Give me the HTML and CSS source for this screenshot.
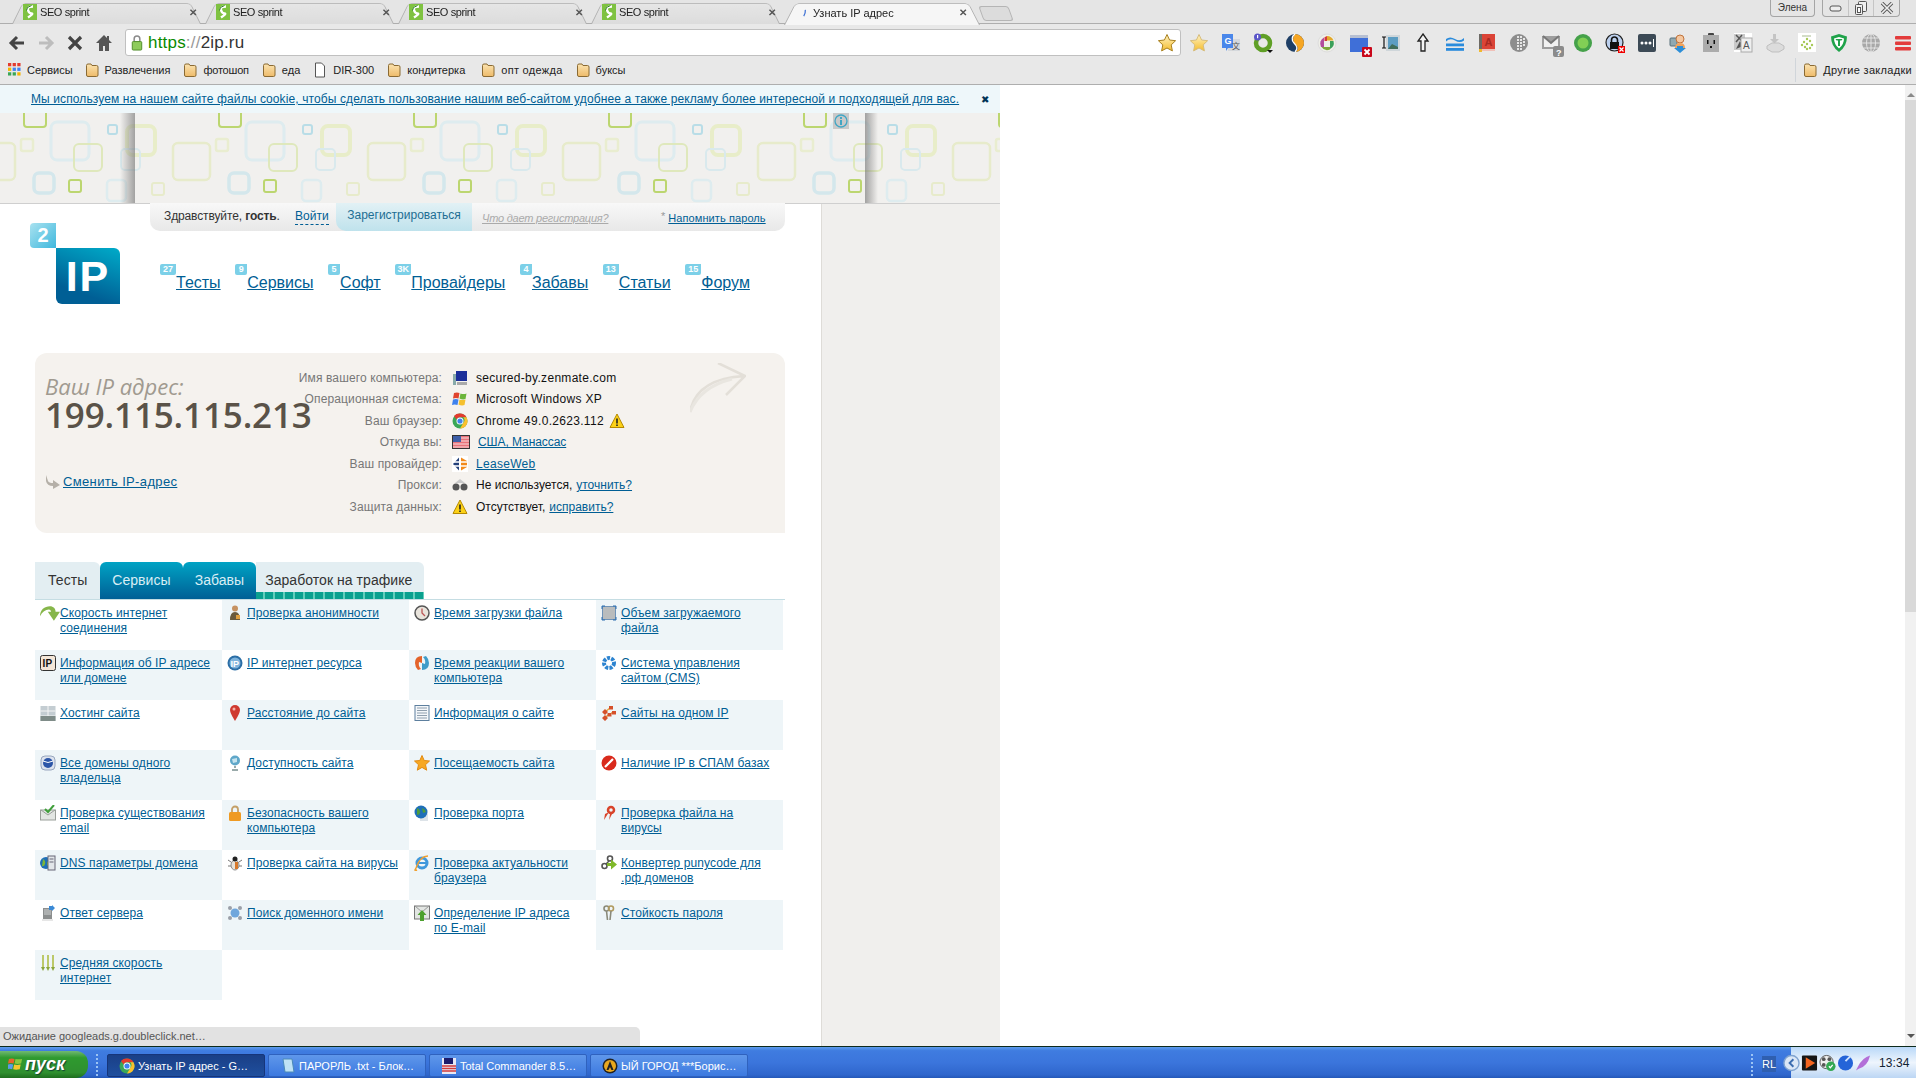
FILE: index.html
```html
<!DOCTYPE html>
<html lang="ru">
<head>
<meta charset="utf-8">
<title>Узнать IP адрес</title>
<link rel="stylesheet" href="styles.css">
</head>
<body>
<svg class="sprite" aria-hidden="true">
  <defs>
    <linearGradient id="gStar" x1="0" y1="0" x2="0" y2="1"><stop offset="0" stop-color="#fff3c4"/><stop offset="1" stop-color="#f5bd2e"/></linearGradient>
    <linearGradient id="gFold" x1="0" y1="0" x2="0" y2="1"><stop offset="0" stop-color="#fbe3b0"/><stop offset="1" stop-color="#eebb6a"/></linearGradient>
    <linearGradient id="gPanelL" x1="0" x2="1" y1="0" y2="0"><stop offset="0" stop-color="#777" stop-opacity="0"/><stop offset="1" stop-color="#777" stop-opacity=".65"/></linearGradient>
    <linearGradient id="gPanelR" x1="0" x2="1" y1="0" y2="0"><stop offset="0" stop-color="#777" stop-opacity=".65"/><stop offset="1" stop-color="#777" stop-opacity="0"/></linearGradient>
    <symbol id="folder" viewBox="0 0 14 16"><path d="M1.500 3.500q0-1.500 1.500-1.500h3l1 1.500h4.500q1.500 0 1.500 1.500v8q0 1.500-1.500 1.500h-8.500q-1.500 0-1.500-1.500z" fill="url(#gFold)" stroke="#8a6a33"/></symbol>
    <symbol id="seo" viewBox="0 0 16 16"><rect x="1" y="0" width="14" height="16" fill="#7fc241"/><path d="M11 2.500Q5 2.500 6 6t3.500 3.500T6 13.500" fill="none" stroke="#fff" stroke-width="2.400"/><path d="M9.500 1.500Q4 3 4.500 6.500" fill="none" stroke="#2f7d2a" stroke-width="1"/></symbol>
    <symbol id="warn" viewBox="0 0 16 16"><path d="M8 1l7 13.500H1z" fill="#fcd116" stroke="#b58900" stroke-linejoin="round"/><path d="M8 5.500v5M8 11.500v1.500" stroke="#222" stroke-width="1.600"/></symbol>
    <symbol id="chrome" viewBox="0 0 16 16"><circle cx="8" cy="8" r="7.500" fill="#3aa757"/><path d="M8 .5a7.500 7.500 0 0 1 6.500 3.750H8a3.750 3.750 0 0 0-3.400 2.200L2 2.900A7.500 7.500 0 0 1 8 .5z" fill="#e33b2e"/><path d="M14.500 4.250A7.500 7.500 0 0 1 8 15.500l3.200-5.500a3.750 3.750 0 0 0 0-5.750z" fill="#fbc02d"/><circle cx="8" cy="8" r="3.500" fill="#fff"/><circle cx="8" cy="8" r="2.600" fill="#3f82ee"/></symbol>
    <symbol id="pat" viewBox="0 0 195 90">
      <rect x="51" y="-4" width="22" height="18" rx="3" fill="none" stroke="#bcd66f" stroke-width="2"/>
      <rect x="78" y="9" width="38" height="38" rx="6" fill="none" stroke="#deecef" stroke-width="3"/>
      <rect x="135" y="12" width="9" height="9" rx="2" fill="none" stroke="#b9dde7" stroke-width="2"/>
      <rect x="154" y="13" width="28" height="29" rx="6" fill="none" stroke="#e8edc9" stroke-width="4"/>
      <rect x="5" y="30" width="37" height="37" rx="5" fill="none" stroke="#e7ebcb" stroke-width="2.500"/>
      <rect x="48" y="26" width="12" height="12" rx="2" fill="none" stroke="#e9edd0" stroke-width="2.500"/>
      <rect x="101" y="31" width="28" height="27" rx="5" fill="none" stroke="#dfe8bc" stroke-width="2"/>
      <rect x="148" y="36" width="19" height="21" rx="4" fill="none" stroke="#d9e9ed" stroke-width="2"/>
      <rect x="61" y="60" width="20" height="20" rx="5" fill="none" stroke="#d4e7ec" stroke-width="3.500"/>
      <rect x="96" y="67" width="12" height="12" rx="2" fill="none" stroke="#bcd66f" stroke-width="2"/>
      <rect x="179" y="70" width="12" height="12" rx="2" fill="none" stroke="#e7ebcb" stroke-width="2"/>
      <rect x="134" y="67" width="19" height="21" rx="4" fill="none" stroke="#deecef" stroke-width="2.500"/>
    </symbol>
  </defs>
</svg>

<header class="chrome">
  <div class="tabstrip">
    <div class="tab"><svg class="fav"><use href="#seo"/></svg><span class="tab-title">SEO sprint</span><span class="tab-x">✕</span></div>
    <div class="tab"><svg class="fav"><use href="#seo"/></svg><span class="tab-title">SEO sprint</span><span class="tab-x">✕</span></div>
    <div class="tab"><svg class="fav"><use href="#seo"/></svg><span class="tab-title">SEO sprint</span><span class="tab-x">✕</span></div>
    <div class="tab"><svg class="fav"><use href="#seo"/></svg><span class="tab-title">SEO sprint</span><span class="tab-x">✕</span></div>
    <div class="tab tab-active"><svg class="spin" viewBox="0 0 16 16"><path d="M6 13Q9 9 8.500 3" fill="none" stroke="#3b6fd4" stroke-width="2"/></svg><span class="tab-title">Узнать IP адрес</span><span class="tab-x">✕</span></div>
    <div class="tab-new"></div>
    <div class="win">
      <span class="win-user">Элена</span>
      <div class="win-btns">
        <span class="win-btn"><svg width="14" height="10" viewBox="0 0 14 10"><rect x="1" y="3" width="11" height="5" rx="2" fill="#eee" stroke="#555"/></svg></span>
        <span class="win-btn"><svg width="14" height="14" viewBox="0 0 14 14"><rect x="4.500" y=".5" width="8" height="10" rx="1" fill="#eee" stroke="#555"/><rect x="1.500" y="3.500" width="7" height="10" rx="1" fill="#eee" stroke="#555"/><rect x="3.500" y="6.500" width="3" height="5" fill="#fff" stroke="#555"/></svg></span>
        <span class="win-btn win-close"><svg width="14" height="12" viewBox="0 0 14 12"><path d="M2 1l10 10M12 1L2 11" stroke="#555" stroke-width="3.400"/><path d="M2 1l10 10M12 1L2 11" stroke="#eee" stroke-width="1.600"/></svg></span>
      </div>
    </div>
  </div>

  <div class="toolbar">
    <div class="navbtns">
      <svg class="nb" viewBox="0 0 20 20"><path d="M17 10H5M10 4l-6 6 6 6" fill="none" stroke="#444" stroke-width="3"/></svg>
      <svg class="nb" viewBox="0 0 20 20"><path d="M3 10h12M10 4l6 6-6 6" fill="none" stroke="#bdbdbd" stroke-width="3"/></svg>
      <svg class="nb" viewBox="0 0 20 20"><path d="M4 4l12 12M16 4L4 16" stroke="#444" stroke-width="3.200"/></svg>
      <svg class="nb" viewBox="0 0 20 20"><path d="M10 2L2 10h3v8h4v-5h2v5h4v-8h3l-3-3V3h-2v2z" fill="#555"/></svg>
    </div>
    <div class="omni">
      <svg class="lock" viewBox="0 0 12 18"><path d="M3 8V5a3 3 0 0 1 6 0v3" fill="none" stroke="#8a8a8a" stroke-width="1.600"/><rect x="1" y="8" width="10" height="9" rx="1" fill="#8ecb5b" stroke="#4d8a26"/></svg>
      <span class="url"><span class="url-s">https</span><span class="url-sep">://</span>2ip.ru</span>
      <svg class="omni-star" viewBox="0 0 20 20"><polygon points="10,1.500 12.600,7 18.600,7.700 14.200,11.900 15.400,17.900 10,15 4.600,17.900 5.800,11.900 1.400,7.700 7.400,7" fill="url(#gStar)" stroke="#a8801f"/></svg>
    </div>
    <div class="exts">
      <svg class="ext" viewBox="0 0 20 20"><polygon points="10,1.500 12.600,7 18.600,7.700 14.200,11.900 15.400,17.900 10,15 4.600,17.900 5.800,11.900 1.400,7.700 7.400,7" fill="url(#gStar)" stroke="#d6bc7c"/></svg>
      <svg class="ext" viewBox="0 0 20 20"><rect x="7" y="6" width="12" height="12" fill="#d5d8dc"/><path d="M1 1h11v14H7l-2 3v-3H1z" fill="#4a87ea"/><text x="3.500" y="11" class="svgt tw">G</text><text x="11" y="16" class="svgt td">文</text></svg>
      <svg class="ext" viewBox="0 0 20 20"><circle cx="10" cy="10" r="7" fill="none" stroke="#5f9f26" stroke-width="4.500"/><circle cx="4.500" cy="4" r="3.500" fill="#5a55c8"/><rect x="4" y="2" width="1.200" height="3.200" fill="#fff"/><path d="M14 17h6l-3 3z" fill="#111"/></svg>
      <svg class="ext" viewBox="0 0 20 20"><circle cx="10" cy="10" r="9" fill="#1f3f66"/><path d="M10 1a9 9 0 0 1 0 18c5-3 2-6 0-8-3-3-2-8 0-10z" fill="#f6a623"/><path d="M10 1c-3 2-4 6-1 9 2 2 5 5 1 9" fill="none" stroke="#fff" stroke-width="1.300"/></svg>
      <svg class="ext" viewBox="0 0 20 20"><circle cx="10" cy="10" r="9" fill="#efefe8" stroke="#ddd"/><path d="M10 3a7 7 0 0 1 6.500 4.500H10z" fill="#e3a92b"/><path d="M16.500 8A7 7 0 0 1 13 16V8z" fill="#3ba05a"/><path d="M13 16.500A7 7 0 0 1 4.500 14h8.500z" fill="#7ca83a"/><path d="M4 14a7 7 0 0 1 3-9.500V14z" fill="#b24c9e"/><path d="M7.500 4.200L10 3v5H7.500z" fill="#d33a3a"/></svg>
      <svg class="ext ext-big" viewBox="0 0 24 24"><rect x="1" y="2" width="18" height="3" fill="#b6bfd2"/><rect x="1" y="5" width="18" height="14" fill="#3f6fd8"/><rect x="13" y="14" width="10" height="10" rx="1" fill="#c9071a"/><path d="M15.500 16.500l5 5M20.500 16.500l-5 5" stroke="#fff" stroke-width="1.800"/></svg>
      <svg class="ext" viewBox="0 0 20 20"><rect x="5" y="2" width="14" height="16" fill="#cfd6da"/><rect x="7" y="4" width="10" height="12" fill="#5d9dc2"/><path d="M7 16l4-5 6 3v2z" fill="#416e5a"/><path d="M1 4h4M1 15h4M3 4v11" stroke="#111" stroke-width="1.200"/></svg>
      <svg class="ext" viewBox="0 0 20 20"><path d="M10 1l5 7h-3v10H8V8H5z" fill="#f4f4f4" stroke="#222" stroke-width="1.300"/></svg>
      <svg class="ext" viewBox="0 0 20 20"><path d="M1 6q4-3 9 0t9-1v2.500q-4 3-9 0T1 8.500z" fill="#2a8bdc"/><rect x="1" y="10.500" width="18" height="2.800" fill="#2a8bdc"/><rect x="1" y="15" width="18" height="2.800" fill="#2a8bdc"/></svg>
      <svg class="ext" viewBox="0 0 20 20"><rect x="2" y="1" width="16" height="17" fill="#db4437"/><rect x="2" y="1" width="3" height="17" fill="#6d6a65"/><rect x="2" y="16" width="16" height="2" fill="#f0c0b8"/><rect x="2" y="16" width="3" height="3" fill="#f0b92e"/><text x="7.500" y="13" class="svgt ta">A</text></svg>
      <svg class="ext" viewBox="0 0 20 20"><circle cx="10" cy="10" r="9" fill="#8d8d8d"/><path d="M8 3h2v2H8zm3 0h2v2h-2zm3 2h2v2h-2zM8 6h2v2H8zm3 0h2v2h-2zm3 2h2v2h-2zM8 9h2v2H8zm3 0h2v2h-2zm3 2h2v2h-2zm-6 1h2v2H8zm3 0h2v2h-2zm-3 3h2v2H8zm3 0h2v2h-2z" fill="#e6e6e6"/></svg>
      <svg class="ext ext-big" viewBox="0 0 24 24"><path d="M1 3h18v13H1z" fill="#9d9d9d"/><path d="M3 4l7 6 7-6v10H3z" fill="#f1f1f1"/><path d="M2 3l8 7 8-7" fill="none" stroke="#777" stroke-width="2"/><rect x="12" y="13" width="11" height="11" rx="2" fill="#8b8b8b"/><text x="15" y="22.500" class="svgt tq">?</text></svg>
      <svg class="ext" viewBox="0 0 20 20"><circle cx="10" cy="10" r="9" fill="#45a14a"/><circle cx="10" cy="10" r="5.500" fill="#82cf55"/></svg>
      <svg class="ext" viewBox="0 0 20 20"><circle cx="9.500" cy="9.500" r="8.500" fill="#bcd0ee" stroke="#222" stroke-width="1.200"/><path d="M6.500 9V7a3 3 0 0 1 6 0v2" fill="none" stroke="#111" stroke-width="1.600"/><rect x="5" y="9" width="9" height="7" fill="#111"/><rect x="13" y="13" width="7" height="7" fill="#e00"/><path d="M14.500 14.500l4 4M18.500 14.500l-4 4" stroke="#fff" stroke-width="1.200"/></svg>
      <svg class="ext" viewBox="0 0 20 20"><rect x="1" y="1" width="18" height="18" rx="2" fill="#3c4a56"/><circle cx="5" cy="10" r="1.500" fill="#fff"/><circle cx="9" cy="10" r="1.500" fill="#fff"/><circle cx="13" cy="10" r="1.500" fill="#fff"/><rect x="16" y="6" width="1" height="8" fill="#fff"/></svg>
      <svg class="ext" viewBox="0 0 20 20"><rect x="1" y="5" width="7" height="8" rx="1" fill="#8fa9b2" stroke="#58707a"/><circle cx="11" cy="6" r="4" fill="#f4c7a0" stroke="#c0733c"/><path d="M6 15q0-5 5-5t5 5z" fill="#f1a35d"/><path d="M8 13h6v2h3l-6 5-6-5h3z" fill="#2d8fd8"/></svg>
      <svg class="ext" viewBox="0 0 20 20"><rect x="7" y="0" width="6" height="3" rx="1" fill="#444"/><rect x="2" y="2" width="16" height="17" fill="#acacac"/><rect x="6" y="7" width="1.500" height="4" fill="#111"/><rect x="12.500" y="7" width="1.500" height="4" fill="#111"/><rect x="9" y="13" width="2" height="2" fill="#111"/></svg>
      <svg class="ext" viewBox="0 0 20 20"><rect x="1" y="0" width="18" height="19" fill="#fff"/><rect x="1" y="1" width="11" height="16" fill="#c9c9c9"/><path d="M3 2l7 7M9 2L3 9" stroke="#555" stroke-width="1.500"/><path d="M3 16l4-8 3 5z" fill="#555"/><rect x="8" y="5" width="11" height="14" fill="#efefef" stroke="#aaa"/><text x="10" y="16" class="svgt tl">A</text></svg>
      <svg class="ext" viewBox="0 0 20 20"><path d="M8 1h3v5h3l-4.500 4.500L5 6h3z" fill="#c4c4c4"/><path d="M2 13l5-3h7l5 3v3l-5 3H7l-5-3z" fill="#dcdcdc" stroke="#bfbfbf"/></svg>
      <svg class="ext" viewBox="0 0 20 20"><rect x="1" y="0" width="18" height="19" fill="#fff"/><path d="M5 3h9" stroke="#a8bb90" stroke-width="1"/><g fill="#a7c957"><circle cx="10" cy="6" r="1.200"/><circle cx="7" cy="9" r="1.200"/><circle cx="13" cy="8" r="1.200"/><circle cx="5" cy="12" r="1.200"/><circle cx="10" cy="11" r="1.200"/><circle cx="15" cy="12" r="1.200"/><circle cx="8" cy="14" r="1.200"/><circle cx="13" cy="15" r="1.200"/><circle cx="10" cy="16" r="1.200"/></g></svg>
      <svg class="ext" viewBox="0 0 20 20"><path d="M10 1l8 2.500q0 10-8 15.500Q2 13.500 2 3.500z" fill="#1fa34a"/><path d="M10 4l5 1.500q0 6-5 10-5-4-5-10z" fill="#fff"/><path d="M6.500 6h7l-1 1.500H11V13H9V7.500H7.500z" fill="#1fa34a"/></svg>
      <svg class="ext" viewBox="0 0 20 20"><circle cx="10" cy="10" r="9" fill="#a8a8a8"/><path d="M1 10h18M10 1v18M3 5h14M3 15h14" stroke="#e4e4e4"/><ellipse cx="10" cy="10" rx="4.500" ry="9" fill="none" stroke="#e4e4e4"/></svg>
      <svg class="ext" viewBox="0 0 20 20"><rect x="2" y="3" width="16" height="3.500" rx="1" fill="#e33b3b"/><rect x="2" y="8.500" width="16" height="3.500" rx="1" fill="#e33b3b"/><rect x="2" y="14" width="16" height="3.500" rx="1" fill="#e33b3b"/></svg>
    </div>
  </div>

  <nav class="bookmarks">
    <span class="bm"><svg class="apps" viewBox="0 0 14 14"><g><rect x="0" y="0" width="3.500" height="3.500" fill="#e33b2e"/><rect x="5" y="0" width="3.500" height="3.500" fill="#e33b2e"/><rect x="10" y="0" width="3.500" height="3.500" fill="#e33b2e"/><rect x="0" y="5" width="3.500" height="3.500" fill="#f4b400"/><rect x="5" y="5" width="3.500" height="3.500" fill="#3f82ee"/><rect x="10" y="5" width="3.500" height="3.500" fill="#3f82ee"/><rect x="0" y="10" width="3.500" height="3.500" fill="#3aa757"/><rect x="5" y="10" width="3.500" height="3.500" fill="#3aa757"/><rect x="10" y="10" width="3.500" height="3.500" fill="#f4b400"/></g></svg>Сервисы</span>
    <span class="bm"><svg class="bmi"><use href="#folder"/></svg>Развлечения</span>
    <span class="bm bm-tight"><svg class="bmi"><use href="#folder"/></svg>фотошоп</span>
    <span class="bm"><svg class="bmi"><use href="#folder"/></svg>еда</span>
    <span class="bm"><svg class="bmi" viewBox="0 0 14 16"><path d="M2.500 1h6l3 3v11h-9z" fill="#fff" stroke="#555"/></svg>DIR-300</span>
    <span class="bm bm-gap"><svg class="bmi"><use href="#folder"/></svg>кондитерка</span>
    <span class="bm bm-wide"><svg class="bmi"><use href="#folder"/></svg>опт одежда</span>
    <span class="bm"><svg class="bmi"><use href="#folder"/></svg>буксы</span>
    <span class="bm bm-other"><svg class="bmi"><use href="#folder"/></svg>Другие закладки</span>
  </nav>
</header>

<div class="viewport">
  <div class="page">
    <div class="cookie"><a href="#">Мы используем на нашем сайте файлы cookie, чтобы сделать пользование нашим веб-сайтом удобнее а также рекламу более интересной и подходящей для вас.</a><span class="cookie-x">✖</span></div>

    <div class="banner">
      <svg class="banner-art" width="1000" height="90" viewBox="0 0 1000 90">
        <defs>
          <pattern id="tile" patternUnits="userSpaceOnUse" x="168" y="0" width="195" height="90"><use href="#pat" width="195" height="90"/></pattern>
          <filter id="soft"><feGaussianBlur stdDeviation=".7"/></filter>
        </defs>
        <rect width="1000" height="90" fill="#f1f0ee"/>
        <rect width="1000" height="90" fill="url(#tile)" filter="url(#soft)"/>
        <rect x="120" width="15" height="90" fill="url(#gPanelL)"/>
        <rect x="865" width="13" height="90" fill="url(#gPanelR)"/>
        <rect x="833" width="16" height="16" fill="#c9c9c9"/>
        <circle cx="841" cy="8" r="6" fill="none" stroke="#41a6c4" stroke-width="1.300"/>
        <rect x="840" y="4" width="2" height="2" fill="#41a6c4"/><rect x="840" y="7" width="2" height="5" fill="#41a6c4"/>
      </svg>
    </div>

    <div class="page-row">
      <main class="main">
        <div class="userbar">
          <span class="hello">Здравствуйте, <b>гость</b>.</span>
          <a class="login" href="#">Войти</a>
          <span class="register">Зарегистрироваться</span>
          <a class="why" href="#">Что дает регистрация?</a>
          <span class="ast">*</span>
          <a class="remind" href="#">Напомнить пароль</a>
        </div>

        <div class="head">
          <div class="logo">
            <span class="logo-two">2</span>
            <span class="logo-ip">IP</span>
          </div>
          <nav class="topnav">
            <div class="tn"><span class="badge badge-w">27</span><a href="#">Тесты</a></div>
            <div class="tn"><span class="badge">9</span><a href="#">Сервисы</a></div>
            <div class="tn"><span class="badge">5</span><a href="#">Софт</a></div>
            <div class="tn"><span class="badge badge-w">3K</span><a href="#">Провайдеры</a></div>
            <div class="tn"><span class="badge">4</span><a href="#">Забавы</a></div>
            <div class="tn"><span class="badge badge-w">13</span><a href="#">Статьи</a></div>
            <div class="tn"><span class="badge badge-w">15</span><a href="#">Форум</a></div>
          </nav>
        </div>

        <section class="ipbox">
          <div class="ipleft">
            <div class="ipcap">Ваш IP адрес:</div>
            <div class="ipnum">199.115.115.213</div>
            <div class="ipchange"><svg class="ipch-i" viewBox="0 0 16 16"><path d="M1 2l2 6q1 2 5 2V7l7 5-7 4v-3q-6 0-7-5z" fill="#b5b0a8"/></svg><a href="#">Сменить IP-адрес</a></div>
          </div>
          <div class="ipinfo">
            <span class="lbl">Имя вашего компьютера:</span><svg class="ii" viewBox="0 0 16 16"><rect x="4" y="1" width="11" height="10" fill="#1c2f9a"/><rect x="1" y="4" width="3" height="11" fill="#8aa"/><rect x="5" y="12" width="10" height="3" fill="#aaa"/></svg><span class="val">secured-by.zenmate.com</span>
            <span class="lbl">Операционная система:</span><svg class="ii" viewBox="0 0 16 16"><path d="M2 2q3-1 5.500 0l-1 5.500Q4 6.500 1 7.500z" fill="#e0442e"/><path d="M8.500 2.500q3 1 6 0L13.500 8q-3 1-6-.5z" fill="#6bb53a"/><path d="M1 8.500q3-1 5.500 0L5.500 14q-3-1-5.500 0z" fill="#3f82ee"/><path d="M7.500 8.500q3 1 6 0l-1 5.500q-3 1-6-.5z" fill="#f5c02e"/></svg><span class="val">Microsoft Windows XP</span>
            <span class="lbl">Ваш браузер:</span><svg class="ii"><use href="#chrome"/></svg><span class="val">Chrome 49.0.2623.112 <svg class="ii-w"><use href="#warn"/></svg></span>
            <span class="lbl">Откуда вы:</span><svg class="ii ii-flag" viewBox="0 0 18 14"><rect width="18" height="14" fill="#333"/><rect x="1" y="1" width="16" height="12" fill="#e8727a"/><path d="M1 3h16M1 6h16M1 9h16M1 12h16" stroke="#f6dede"/><rect x="1" y="1" width="8" height="6" fill="#3e5fa8"/></svg><a class="val-a val-us" href="#">США, Манассас</a>
            <span class="lbl">Ваш провайдер:</span><svg class="ii" viewBox="0 0 16 16"><rect width="16" height="16" fill="#fff"/><path d="M7 1.500v13L1 8z" fill="#24417a"/><path d="M9 1.500L15 5v6l-6 3.500z" fill="#f28a1a"/><path d="M1 6h14M1 10h14" stroke="#fff" stroke-width="1.300"/></svg><a class="val-a" href="#">LeaseWeb</a>
            <span class="lbl">Прокси:</span><svg class="ii" viewBox="0 0 16 16"><circle cx="4" cy="10" r="3.500" fill="#555"/><circle cx="12" cy="10" r="3.500" fill="#555"/><path d="M3 6l5-4 5 4" fill="#c9c9c9"/></svg><span class="val val-ru">Не используется, <a href="#">уточнить?</a></span>
            <span class="lbl">Защита данных:</span><svg class="ii"><use href="#warn"/></svg><span class="val val-ru">Отсутствует, <a href="#">исправить?</a></span>
          </div>
          <svg class="iparrow" viewBox="0 0 56 50"><path d="M0 49Q6 16 54 13M28 0L55 13 36 32" fill="none" stroke="#e3dfd8" stroke-width="2.500"/><path d="M0 49Q10 24 42 16" fill="none" stroke="#e9e6e0" stroke-width="3"/></svg>
        </section>

        <div class="tabs">
          <span class="ptab ptab-l ptab-first">Тесты</span>
          <span class="ptab ptab-d">Сервисы</span>
          <span class="ptab ptab-d">Забавы</span>
          <span class="ptab ptab-l ptab-g">Заработок на трафике</span>
        </div>

        <div class="links">
          <div class="cell"><svg class="ci ci-w" viewBox="0 0 18 16"><path d="M0 10C0 4 4 1 9 1c3 0 5 2 5 5h4l-5.500 8L7 6h3c0-1-1-2-2-2C5 4 2 6 0 10z" fill="#86b64a"/></svg><a href="#">Скорость интернет<br>соединения</a></div>
          <div class="cell"><svg class="ci" viewBox="0 0 16 16"><circle cx="8" cy="3.500" r="3" fill="#c69262"/><path d="M3 15q0-8 5-8t5 8z" fill="#6a5a3c"/><rect x="9" y="10" width="4" height="4" fill="#e0a040"/></svg><a href="#">Проверка анонимности</a></div>
          <div class="cell"><svg class="ci" viewBox="0 0 16 16"><circle cx="8" cy="8" r="7" fill="#e9e4dc" stroke="#555" stroke-width="1.500"/><path d="M8 3.500V8l3 3" fill="none" stroke="#b55" stroke-width="1.300"/></svg><a href="#">Время загрузки файла</a></div>
          <div class="cell"><svg class="ci" viewBox="0 0 16 16"><rect x="1.500" y="1.500" width="13" height="13" fill="#b9bcbd" stroke="#6f93b8"/><path d="M1 4V1h3M12 1h3v3M1 12v3h3M12 15h3v-3" fill="none" stroke="#2d6fb0"/></svg><a href="#">Объем загружаемого<br>файла</a></div>

          <div class="cell"><svg class="ci" viewBox="0 0 16 16"><rect x=".5" y=".5" width="15" height="15" rx="2" fill="#f3e6d8" stroke="#333"/><text x="2.500" y="12" class="svgt tip">IP</text></svg><a href="#">Информация об IP адресе<br>или домене</a></div>
          <div class="cell"><svg class="ci" viewBox="0 0 16 16"><circle cx="8" cy="8" r="7.500" fill="#2b6ea6"/><circle cx="8" cy="8" r="5.500" fill="#7eb3dc"/><text x="3.500" y="12" class="svgt tipw">IP</text></svg><a href="#">IP интернет ресурса</a></div>
          <div class="cell"><svg class="ci" viewBox="0 0 16 16"><path d="M8 1Q1 1 1 8q0 4 3 7l3-1Q4 11 5 7l3 1z" fill="#e4632a"/><path d="M8 15q7 0 7-7 0-4-3-7L9 2q3 3 2 7L8 8z" fill="#3f9cc9"/></svg><a href="#">Время реакции вашего<br>компьютера</a></div>
          <div class="cell"><svg class="ci" viewBox="0 0 16 16"><circle cx="8" cy="8" r="5" fill="none" stroke="#2d84d0" stroke-width="4" stroke-dasharray="3 1.200"/><circle cx="8" cy="8" r="2" fill="#fff"/></svg><a href="#">Система управления<br>сайтом (CMS)</a></div>

          <div class="cell"><svg class="ci" viewBox="0 0 16 16"><rect x=".5" y="1" width="15" height="15" fill="#c4cdd2"/><path d="M.5 6h15M.5 11h15M8 1v15" stroke="#f5f5f5"/><rect x=".5" y="11" width="15" height="5" fill="#7f8c88"/></svg><a href="#">Хостинг сайта</a></div>
          <div class="cell"><svg class="ci" viewBox="0 0 16 16"><path d="M8 16Q3 8 3 5a5 5 0 0 1 10 0q0 3-5 11z" fill="#cf3a30"/><circle cx="7" cy="4" r="1.500" fill="#f4b0a8"/></svg><a href="#">Расстояние до сайта</a></div>
          <div class="cell"><svg class="ci" viewBox="0 0 16 16"><rect x="1" y=".5" width="14" height="15" fill="#f4f7fa" stroke="#5d7f9e"/><path d="M3 3h10M3 5.500h10M3 8h10M3 10.500h10M3 13h10" stroke="#8f9fae"/></svg><a href="#">Информация о сайте</a></div>
          <div class="cell"><svg class="ci" viewBox="0 0 16 16"><path d="M4 7l5-4M4 13l3-3M10 8h2" stroke="#e8a33a" stroke-width="1.500"/><path d="M1 7l3-3 3 3-3 3zM8 1h4v3.500H8zM11 6h4v3.500h-4zM1 13l3-3 3 3-3 3zM6.500 8h4v3.500h-4z" fill="#d5502a"/></svg><a href="#">Сайты на одном IP</a></div>

          <div class="cell"><svg class="ci" viewBox="0 0 16 16"><rect x="1" y="1" width="14" height="14" rx="4" fill="#dde3ee" stroke="#97a6be"/><circle cx="8" cy="8" r="5" fill="#2c56a8"/><path d="M3 6q5 3 10 0" stroke="#fff" fill="none"/></svg><a href="#">Все домены одного<br>владельца</a></div>
          <div class="cell"><svg class="ci" viewBox="0 0 16 16"><circle cx="8" cy="5.500" r="5" fill="#5fa7c9"/><path d="M5 4l5-1v4l-4 1z" fill="#c5e3ee"/><path d="M8 11v2M5 15h6" stroke="#9aa" stroke-width="2"/></svg><a href="#">Доступность сайта</a></div>
          <div class="cell"><svg class="ci" viewBox="0 0 16 16"><polygon points="8,.5 10.200,5.500 15.500,6 11.500,9.700 12.700,15.200 8,12.400 3.300,15.200 4.500,9.700 .5,6 5.800,5.500" fill="#f7a823" stroke="#e28b12"/></svg><a href="#">Посещаемость сайта</a></div>
          <div class="cell"><svg class="ci" viewBox="0 0 16 16"><circle cx="8" cy="8" r="7.500" fill="#d92a1c"/><path d="M4 12l8-8" stroke="#fff" stroke-width="2.200"/></svg><a href="#">Наличие IP в СПАМ базах</a></div>

          <div class="cell"><svg class="ci" viewBox="0 0 16 16"><rect x=".5" y="5" width="15" height="10" fill="#e3e6e3" stroke="#9a9f9a"/><path d="M1 5l7 5 7-5" fill="none" stroke="#9a9f9a"/><path d="M5 4l3 3 6-7" fill="none" stroke="#3f9f3a" stroke-width="2"/></svg><a href="#">Проверка существования<br>email</a></div>
          <div class="cell"><svg class="ci" viewBox="0 0 16 16"><path d="M5 8V4.500a3 3 0 0 1 6 0V8" fill="none" stroke="#c4a068" stroke-width="1.800"/><rect x="2" y="7" width="12" height="9" rx="1.500" fill="#ef9a22"/></svg><a href="#">Безопасность вашего<br>компьютера</a></div>
          <div class="cell"><svg class="ci" viewBox="0 0 16 16"><rect x="6" y="9" width="8" height="7" fill="#dde3e8"/><circle cx="7" cy="7" r="6.500" fill="#1f6fb8"/><path d="M3 3q3 1 3 4t-3 3zM8 3q3 1 4 4l-3 1z" fill="#4f9d3a"/></svg><a href="#">Проверка порта</a></div>
          <div class="cell"><svg class="ci" viewBox="0 0 16 16"><circle cx="10" cy="5" r="3" fill="none" stroke="#d8432a" stroke-width="2.500"/><path d="M8 7L3 15l1-6zM12 7l-4 8 1-6z" fill="#d8432a"/></svg><a href="#">Проверка файла на<br>вирусы</a></div>

          <div class="cell"><svg class="ci" viewBox="0 0 16 16"><circle cx="6" cy="8" r="6" fill="#1f6fb8"/><path d="M3 4q3 2 2 5t-3 2zM7 6l2 3-2 2z" fill="#7db63a"/><rect x="8" y="1" width="7" height="14" fill="#e2e6ea" stroke="#667"/><path d="M9.500 4h4M9.500 7h4" stroke="#667"/></svg><a href="#">DNS параметры домена</a></div>
          <div class="cell"><svg class="ci" viewBox="0 0 16 16"><ellipse cx="8" cy="10" rx="4" ry="5" fill="#e7e2d8" stroke="#888"/><circle cx="8" cy="4" r="2.500" fill="#222"/><path d="M4 7L1 5M4 11H1M12 7l3-2M12 11h3" stroke="#777"/><rect x="8" y="7" width="3" height="7" fill="#d8792b"/></svg><a href="#">Проверка сайта на вирусы</a></div>
          <div class="cell"><svg class="ci" viewBox="0 0 16 16"><circle cx="8" cy="8" r="5" fill="none" stroke="#3f98dc" stroke-width="3"/><path d="M3 8h10" stroke="#3f98dc" stroke-width="2"/><path d="M14 1Q6 1 2 13l-1 2q0 1 2 0" fill="none" stroke="#f0a030" stroke-width="1.500"/></svg><a href="#">Проверка актуальности<br>браузера</a></div>
          <div class="cell"><svg class="ci" viewBox="0 0 16 16"><circle cx="3.500" cy="11" r="2.500" fill="none" stroke="#555" stroke-width="1.600"/><circle cx="9" cy="3.500" r="2.500" fill="none" stroke="#555" stroke-width="1.600"/><path d="M5 9l3-3" stroke="#555" stroke-width="1.500"/><path d="M6 8h4V4.500L16 9.500l-6 5V11H6z" fill="#7fb82a"/></svg><a href="#">Конвертер punycode для<br>.рф доменов</a></div>

          <div class="cell"><svg class="ci" viewBox="0 0 16 16"><rect x="3" y="3" width="9" height="11" fill="#8b8e8e"/><path d="M4 5h7M4 7h7M4 9h7" stroke="#cfd2d2"/><rect x="2" y="14" width="11" height="2" fill="#e6e6e6"/><path d="M9 1h3V0l3 3-3 3V5H9z" fill="#3a8ad6"/></svg><a href="#">Ответ сервера</a></div>
          <div class="cell"><svg class="ci" viewBox="0 0 16 16"><circle cx="8" cy="8" r="4.500" fill="#6fa6dc"/><g fill="#9a9fa8"><circle cx="3" cy="3" r="2"/><circle cx="13" cy="3" r="2"/><circle cx="3" cy="13" r="2"/><circle cx="13" cy="13" r="2"/></g></svg><a href="#">Поиск доменного имени</a></div>
          <div class="cell"><svg class="ci" viewBox="0 0 16 16"><rect x=".5" y="1" width="15" height="13" fill="#e3e6e3" stroke="#777"/><path d="M1 1l7 6 7-6" fill="none" stroke="#999"/><path d="M8 5l4.500 5H10v6H6v-6H3.500z" fill="#4da02e"/></svg><a href="#">Определение IP адреса<br>по E-mail</a></div>
          <div class="cell"><svg class="ci" viewBox="0 0 16 16"><circle cx="5.500" cy="3.500" r="2.500" fill="none" stroke="#8a8a7a" stroke-width="1.600"/><circle cx="10" cy="3.500" r="2.500" fill="none" stroke="#b09a60" stroke-width="1.600"/><path d="M5.500 6l1 9M10 6l-1 9" stroke="#8a8a7a" stroke-width="1.600"/></svg><a href="#">Стойкость пароля</a></div>

          <div class="cell"><svg class="ci" viewBox="0 0 16 16"><path d="M3 0v13M8 0v13M13 0v13" stroke="#bcc96a" stroke-width="2"/><path d="M1 12l2 4 2-4zM6 12l2 4 2-4zM11 12l2 4 2-4z" fill="#8aa63a"/></svg><a href="#">Средняя скорость<br>интернет</a></div>
        </div>
      </main>
      <aside class="side"></aside>
    </div>
  </div>
  <div class="scrollbar">
    <span class="sb-up"></span>
    <span class="sb-thumb"></span>
    <span class="sb-down"></span>
  </div>
  <div class="status">Ожидание googleads.g.doubleclick.net…</div>
</div>

<footer class="taskbar">
  <div class="start"><svg class="flag" viewBox="0 0 16 16"><path d="M1 2q3-1 6 0L6 7Q3 6 0 7z" fill="#e9622b"/><path d="M8 2q3 1 7 0l-1 5q-4 1-7 0z" fill="#8cc63f"/><path d="M0 8q3-1 5.500 0l-1 5q-2.500-1-5.500 0z" fill="#5a9bea"/><path d="M6.500 8q3 1 7 0l-1 5q-4 1-7 0z" fill="#f6c62e"/></svg>пуск</div>
  <div class="grip"></div>
  <div class="tasks">
    <div class="task task-on"><svg class="tki"><use href="#chrome"/></svg>Узнать IP адрес - G…</div>
    <div class="task"><svg class="tki" viewBox="0 0 16 16"><path d="M3 1h9l2 13H5z" fill="#bfe2f5" stroke="#4a8ab8"/></svg>ПАРОРЛЬ .txt - Блок…</div>
    <div class="task"><svg class="tki" viewBox="0 0 16 16"><rect x="1" y="0" width="14" height="16" fill="#e8e8f4"/><rect x="3" y="0" width="9" height="6" fill="#1c1c6c"/><path d="M1 8h14M1 10.500h14M1 13h14" stroke="#d23a3a" stroke-width="1.300"/></svg>Total Commander 8.5…</div>
    <div class="task"><svg class="tki" viewBox="0 0 16 16"><circle cx="8" cy="8" r="7.500" fill="#222"/><circle cx="8" cy="8" r="6" fill="#e9a81e"/><path d="M8 3l3.500 9h-2L8 9l-1.500 3h-2z" fill="#222"/></svg>ЫЙ ГОРОД ***Борис…</div>
  </div>
  <div class="rl-grip"></div>
  <span class="rl">RL</span>
  <div class="tray">
    <svg class="tri tri-back" viewBox="0 0 18 18"><circle cx="9" cy="9" r="8" fill="#dbe7f6" stroke="#7fa3d0" stroke-width="1.500"/><path d="M11 5L7 9l4 4" fill="none" stroke="#3b6cb0" stroke-width="2"/></svg>
    <svg class="tri" viewBox="0 0 18 18"><rect x="1" y="1" width="16" height="16" rx="1" fill="#151515"/><path d="M5 3l10 6-10 6z" fill="#f4641e"/></svg>
    <svg class="tri" viewBox="0 0 18 18"><circle cx="8" cy="8" r="7" fill="#eee" stroke="#555"/><circle cx="5" cy="5" r="2" fill="#555"/><circle cx="11" cy="5" r="2" fill="#555"/><circle cx="5" cy="11" r="2" fill="#555"/><circle cx="12.500" cy="12.500" r="5" fill="#34a853"/><path d="M10.500 12.500l1.500 1.500 2.500-3" fill="none" stroke="#fff" stroke-width="1.300"/></svg>
    <svg class="tri" viewBox="0 0 18 18"><circle cx="9" cy="9" r="8" fill="#2564d8"/><path d="M9 7l5-5" stroke="#cfe2ff" stroke-width="2"/></svg>
    <svg class="tri" viewBox="0 0 18 18"><path d="M16 1Q8 3 3 13l-2 4 3-2Q13 13 16 1z" fill="#b36fd8"/></svg>
    <span class="clock">13:34</span>
  </div>
</footer>
</body>
</html>
```

FILE: styles.css
```css
* { box-sizing: border-box; }
html, body { margin: 0; height: 100%; }
body {
  width: 1916px; height: 1078px; overflow: hidden;
  display: flex; flex-direction: column;
  font-family: "Liberation Sans", Arial, sans-serif; font-size: 12px; color: #111; background: #fff;
}
a { color: #005e94; }
.sprite { position: absolute; width: 0; height: 0; }

/* browser chrome */
.chrome { background: #e8e8e8; flex: none; }
.tabstrip { height: 24px; display: flex; padding-left: 10px; border-bottom: 1px solid #aeaeae; background: #e5e5e5; position: relative; }
.tab { position: relative; width: 193px; height: 24px; display: flex; align-items: center; padding: 0 6px 0 12px; font-size: 11px; }
.tab::before { content: ""; position: absolute; inset: 0 2px 0 2px; background: linear-gradient(#e6e6e6, #dcdcdc); border: 1px solid #b0b0b0; border-bottom: 0; border-radius: 5px 5px 0 0; transform: perspective(30px) rotateX(9deg); transform-origin: bottom; }
.tab > * { position: relative; }
.tab-active { width: 200px; padding: 0 15px 0 18px; height: 25px; z-index: 2; }
.tab-active::before { background: #f6f6f6; }
.fav { width: 16px; height: 16px; margin-right: 2px; flex: none; }
.spin { width: 10px; height: 12px; margin-right: 3px; flex: none; }
.tab-title { flex: 1; white-space: nowrap; color: #222; letter-spacing: -.4px; }
.tab-active .tab-title { letter-spacing: 0; }
.tab-x { font-size: 10px; color: #555; font-weight: 700; }
.tab-new { width: 30px; height: 15px; margin: 6px 0 0 -1px; background: #dcdcdc; border: 1px solid #b5b5b5; border-radius: 3px; transform: skewX(20deg); }
.win { margin-left: auto; display: flex; gap: 7px; height: 17px; padding-right: 16px; }
.win-user { width: 45px; height: 17px; border: 1px solid #a5a5a5; border-top: 0; border-radius: 0 0 4px 4px; text-align: center; font-size: 10px; line-height: 15px; color: #333; }
.win-btns { display: flex; border: 1px solid #a5a5a5; border-top: 0; border-radius: 0 0 4px 4px; }
.win-btn { width: 25px; display: flex; align-items: center; justify-content: center; border-left: 1px solid #c5c5c5; }
.win-btn:first-child { border-left: 0; }
.win-close { width: 26px; }

.toolbar { height: 33px; display: flex; align-items: center; padding: 4px 2px 0 0; }
.navbtns { width: 125px; display: flex; gap: 9px; padding-left: 7px; }
.nb { width: 20px; height: 20px; }
.omni { width: 1056px; height: 27px; background: #fff; border: 1px solid #c0c0c0; border-radius: 3px; display: flex; align-items: center; padding-left: 5px; }
.lock { width: 12px; height: 17px; margin-right: 5px; flex: none; }
.url { font-size: 17px; letter-spacing: .2px; color: #333; }
.url-s { color: #0a8a00; }
.url-sep { color: #999; }
.omni-star { width: 20px; height: 20px; margin-left: auto; margin-right: 3px; }
.exts { display: flex; gap: 12px; padding-left: 8px; align-items: center; }
.ext { width: 20px; height: 20px; flex: none; }
.ext-big { width: 24px; height: 24px; margin: 4px -4px 0 0; }
.svgt { font-family: "Liberation Sans", Arial, sans-serif; }
.tw { font-size: 9px; font-weight: 700; fill: #fff; }
.td { font-size: 8px; fill: #555; font-family: "Noto Sans CJK SC", sans-serif; }
.ta { font-size: 11px; font-weight: 700; fill: #a82a22; }
.tq { font-size: 9px; font-weight: 700; fill: #fff; }
.tl { font-size: 10px; fill: #555; }
.tip { font-size: 10px; font-weight: 700; fill: #111; }
.tipw { font-size: 9px; font-weight: 700; fill: #fff; }

.bookmarks { height: 28px; display: flex; align-items: center; padding: 0 0 2px 8px; border-bottom: 1px solid #aeaeae; font-size: 11px; color: #222; }
.bm { display: flex; align-items: center; margin-right: 13px; white-space: nowrap; }
.bm:first-child { margin-right: 12px; }
.bm-tight { letter-spacing: -.2px; }
.bm-gap { margin-right: 16px; }
.bm-wide { letter-spacing: .3px; }
.apps { width: 13px; height: 13px; margin-right: 6px; }
.bmi { width: 14px; height: 16px; margin-right: 6px; flex: none; }
.bm-other { margin: 0 4px 0 auto; padding-left: 7px; border-left: 1px solid #d0d5da; height: 24px; letter-spacing: .3px; }

/* viewport */
.viewport { flex: 1; min-height: 0; display: flex; position: relative; background: #fff; }
.page { width: 1000px; flex: none; display: flex; flex-direction: column; }
.cookie { height: 28px; flex: none; background: #eef7fa; display: flex; align-items: center; padding: 0 11px 0 31px; justify-content: space-between; letter-spacing: .11px; }
.cookie a { white-space: nowrap; }
.cookie-x { font-size: 10px; color: #035; }
.banner { height: 90px; flex: none; }
.banner-art { display: block; }
.page-row { flex: 1; display: flex; min-height: 0; border-top: 1px solid #cfcfcf; }
.main { width: 821px; flex: none; }
.side { flex: 1; background: #f0efed; border-left: 1px solid #dedcd8; }
.scrollbar { margin-left: auto; width: 11px; background: #f1f1f1; display: flex; flex-direction: column; align-items: center; }
.sb-up, .sb-down { height: 15px; flex: none; width: 0; border: 4px solid transparent; }
.sb-up { border-bottom-color: #8a8a8a; height: 8px; margin: 4px 0 3px; border-top: 0; }
.sb-down { border-top-color: #555; height: 8px; margin: auto 0 4px; border-bottom: 0; }
.sb-thumb { width: 100%; height: 512px; background: #d9d9d9; }
.status { position: absolute; left: 0; bottom: 0; width: 640px; height: 19px; background: #e2e2e2; border-top-right-radius: 5px; font-size: 11px; line-height: 19px; padding-left: 3px; color: #555; }

/* 2ip */
.userbar { margin: -1px 0 0 150px; width: 635px; height: 28px; position: relative; display: flex; align-items: center; background: linear-gradient(#f8f8f8, #e8e8e8); border-radius: 0 0 10px 10px; padding-left: 14px; color: #333; }
.hello { width: 131px; margin-bottom: 3px; white-space: nowrap; letter-spacing: -.12px; }
.login { text-decoration: none; border-bottom: 1px dashed #005e94; line-height: 15px; width: 34px; margin-right: 7px; }
.register { align-self: stretch; width: 136px; background: linear-gradient(#e2f1f5, #bfe2ec); border-radius: 0 0 0 10px; color: #1d6e93; padding-top: 5px; text-align: center; }
.why { font-size: 11px; font-style: italic; color: #aaa; margin: 2px 0 0 10px; width: 179px; letter-spacing: -.22px; white-space: nowrap; }
.ast { color: #999; margin: -3px 3px 0 0; font-size: 11px; }
.remind { font-size: 11px; margin-top: 2px; letter-spacing: .09px; white-space: nowrap; }

.head { display: flex; margin-top: -8px; padding-left: 30px; height: 81px; position: relative; }
.logo { width: 90px; flex: none; display: flex; flex-direction: column; }
.logo-two { width: 26px; height: 25px; border-radius: 4px 0 0 4px; background: linear-gradient(135deg, #a9e2f0, #3fb8dd); color: #fff; font-weight: 700; font-size: 20px; line-height: 25px; text-align: center; }
.logo-ip { width: 64px; height: 56px; margin-left: 26px; border-radius: 0 6px 0 6px; background: linear-gradient(200deg, #00abc9, #005f95 75%); color: #fff; font-weight: 700; font-size: 43px; line-height: 56px; text-align: center; letter-spacing: 2px; }
.topnav { display: flex; gap: 14.6px; margin: 41px 0 0 40px; font-size: 16px; }
.tn { display: flex; align-items: flex-start; }
.tn a { margin-top: 10px; white-space: nowrap; }
.badge { flex: none; width: 12px; height: 11px; border-radius: 2px 0 2px 2px; background: #7cd0e8; color: #fff; font-size: 9px; font-weight: 700; line-height: 11px; text-align: center; }
.badge-w { width: 16px; }

.ipbox { margin: 49px 0 0 35px; width: 750px; height: 180px; background: #f5f2ee; border-radius: 12px 12px 0 12px; display: flex; padding: 14px 0 0 10px; position: relative; }
.ipleft { width: 200px; flex: none; white-space: nowrap; }
.ipcap { font-family: "Open Sans", sans-serif; font-style: italic; font-size: 22px; line-height: 24px; margin-top: 7px; color: #a09a90; }
.ipnum { font-family: "Open Sans", sans-serif; font-weight: 600; font-size: 35px; line-height: 34px; letter-spacing: -.15px; color: #5a5248; }
.ipchange { display: flex; align-items: center; margin-top: 41px; font-size: 13px; letter-spacing: .35px; }
.ipch-i { width: 16px; height: 16px; margin-right: 2px; }
.ipinfo { width: 530px; display: grid; grid-template-columns: 197px 16px 1fr; grid-auto-rows: 21.5px; align-items: center; height: 151px; }
.lbl { text-align: right; color: #777; white-space: nowrap; letter-spacing: .12px; }
.ii { width: 16px; height: 16px; margin-left: 10px; }
.ii-flag { width: 18px; height: 14px; }
.val, .val-a { margin-left: 18px; white-space: nowrap; letter-spacing: .3px; display: inline-flex; align-items: center; gap: 3px; }
.val-ru { letter-spacing: 0; }
.val-us { margin-left: 20px; letter-spacing: -.07px; }
.val a { margin-left: 1px; }
.ii-w { width: 16px; height: 16px; margin-left: 2px; }
.iparrow { position: absolute; left: 655px; top: 10px; width: 56px; height: 50px; }

.tabs { margin: 29px 0 0 35px; width: 750px; height: 38px; display: flex; border-bottom: 1px solid #c5dde3; font-size: 14px; line-height: 36px; }
.ptab { height: 37px; padding: 0 12px; letter-spacing: .05px; border-radius: 0 6px 0 0; white-space: nowrap; position: relative; }
.ptab-first { padding: 0 13px; }
.ptab-l { background: #e3eef2; color: #333; }
.ptab-d { background: linear-gradient(#00a3c4, #005f95); color: #d9eef5; border-radius: 6px 6px 0 0; }
.ptab-g { padding: 0 12px 0 9px; }
.ptab-g::after { content: ""; position: absolute; left: 0; right: 0; bottom: 0; height: 7px; background: repeating-linear-gradient(90deg, #0aa08f 0 7px, #63cdbb 7px 9px, #0aa08f 9px 10px); }

.links { margin-left: 35px; display: grid; grid-template-columns: repeat(4, 187px); grid-auto-rows: 50px; line-height: 15px; letter-spacing: .1px; }
.cell { display: flex; padding: 6px 2px 0 5px; gap: 4px; white-space: nowrap; }
.cell:nth-child(8n+2), .cell:nth-child(8n+4), .cell:nth-child(8n+5), .cell:nth-child(8n+7) { background: #eef5f8; }
.ci { width: 16px; height: 16px; flex: none; margin-top: -1px; }
.ci-w { width: 20px; height: 18px; margin-right: -4px; }

/* taskbar */
.taskbar { height: 32px; flex: none; display: flex; align-items: flex-end; border-top: 1px solid #0d2a1c; background: linear-gradient(#5e9cec 0, #3f7ce0 12%, #3b75dc 50%, #2f66cc 90%, #2458b8 100%); color: #fff; position: relative; }
.start { width: 88px; height: 27px; flex: none; border-radius: 0 12px 12px 0; background: linear-gradient(#72b872, #2f9a2f 25%, #2f8f2f 80%, #1e6e1e); display: flex; align-items: center; padding-left: 8px; font-size: 18px; font-weight: 700; font-style: italic; gap: 2px; text-shadow: 1px 1px 1px #143; }
.flag { width: 15px; height: 15px; }
.grip { width: 4px; height: 22px; margin: 0 7px 2px 8px; border-left: 2px dotted #9cc4f4; flex: none; }
.tasks { display: flex; gap: 3px; flex: none; margin-bottom: 1px; }
.task { width: 158px; height: 23px; border-radius: 2px; background: linear-gradient(#5f97ea, #3c79e0); border: 1px solid #2f62be; display: flex; align-items: center; padding-left: 11px; font-size: 11px; white-space: nowrap; overflow: hidden; }
.task-on { background: linear-gradient(#1a3f86, #1f4f9e); border-color: #16357a; }
.tki { width: 16px; height: 16px; margin-right: 3px; flex: none; }
.rl-grip { margin-left: auto; width: 4px; height: 22px; margin-bottom: 2px; border-left: 2px dotted #9cc4f4; }
.rl { width: 14px; height: 16px; margin: 0 15px 6px 7px; background: #2f5fb0; font-size: 11px; line-height: 16px; text-align: center; }
.tray { width: 125px; height: 31px; flex: none; display: flex; align-items: center; padding-left: 1px; gap: 1px; background: linear-gradient(#b9d8f8, #eef5fd 50%, #bcd6f4); color: #123; }
.tri { width: 17px; height: 18px; flex: none; }
.tri-back { margin-left: -9px; }
.clock { margin-left: 6px; font-size: 12px; letter-spacing: .1px; }
```
